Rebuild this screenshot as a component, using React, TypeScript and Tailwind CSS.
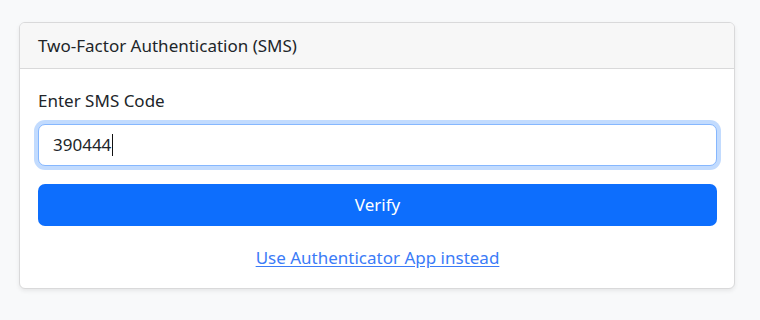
import React from "react";

export default function App() {
  return (
    <div
      className="min-h-[320px] w-[760px] bg-[#f8f9fa] pt-[22px]"
      style={{ fontFamily: '"Noto Sans", "Open Sans", sans-serif' }}
    >
      <div className="ml-[19px] w-[716px] overflow-hidden rounded-[6px] border border-[#d9d9da] bg-white shadow-[0_2px_4px_rgba(0,0,0,0.075)]">
        <div className="flex h-[46px] items-center border-b border-[#d9d9da] bg-[#f7f7f7] pl-[18px] text-[17px] text-[#212529]">
          Two-Factor Authentication (SMS)
        </div>
        <div className="flex flex-col pl-[18px] pr-[17px] pt-[20px] pb-[18px]">
          <label className="h-[24px] text-[17px] leading-[24px] text-[#212529]">
            Enter SMS Code
          </label>
          <div className="mt-[11px] flex h-[42px] items-center rounded-[7px] border border-[#86b7fe] bg-white pl-[14px] text-[17px] text-[#212529] shadow-[0_0_0_4px_rgba(13,110,253,0.25)]">
            <span>390444</span>
            <span className="ml-px inline-block h-[22px] w-px bg-[#111]" />
          </div>
          <button
            type="button"
            className="mt-[18px] flex h-[42px] items-center justify-center rounded-[7px] bg-[#0d6efd] text-[17px] text-white"
          >
            Verify
          </button>
          <div className="mt-[20px] flex h-[24px] items-center justify-center">
            <a
              href="#"
              className="text-[17px] leading-[24px] text-[#3b7bf7] underline underline-offset-[2px]"
            >
              Use Authenticator App instead
            </a>
          </div>
        </div>
      </div>
    </div>
  );
}
